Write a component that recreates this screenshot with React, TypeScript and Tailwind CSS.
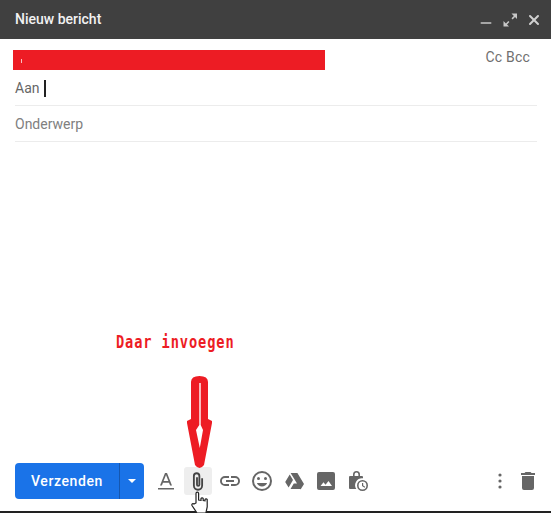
import { Minus, X } from 'lucide-react'

const Icon = ({ d, className = '' }: { d: string; className?: string }) => (
  <svg viewBox="0 0 24 24" className={`w-6 h-6 fill-[#666666] ${className}`}>
    <path d={d} />
  </svg>
)

export default function App() {
  return (
    <div className="relative w-[551px] h-[513px] bg-white flex flex-col overflow-hidden font-['Roboto',sans-serif]">
      {/* Header */}
      <div className="h-[39px] shrink-0 bg-[#404040] flex items-center justify-between pl-[15px] pr-[9px]">
        <span className="text-[14px] font-medium text-[#f2f2f2]">Nieuw bericht</span>
        <div className="flex items-center gap-[8px]">
          <Minus className="w-4 h-4 text-[#c8c8c8] translate-y-[3px]" strokeWidth={2.5} />
          <svg viewBox="0 0 16 16" className="w-4 h-4 fill-[#c8c8c8]">
            <path d="M9.5 1.5H15V7l-2-2-2.4 2.4-1.1-1.1L11.9 4zM1.5 9v5.5H7l-2-2 2.4-2.4-1.1-1.1L3.9 11.4z" />
          </svg>
          <X className="w-4 h-4 text-[#d0d0d0]" strokeWidth={3} />
        </div>
      </div>

      {/* Fields */}
      <div className="relative pt-[11px] flex flex-col">
        <div className="flex items-start justify-between h-[20px] pl-[13px] pr-[21px]">
          <div className="relative w-[312px] h-[20px] bg-[#ed1c24]">
            <div className="absolute left-[8px] top-[9px] w-px h-[4px] bg-[#f9c0c0]" />
          </div>
          <span className="text-[14px] leading-[14px] text-[#6f6f6f] tracking-[0.2px]">Cc Bcc</span>
        </div>
        <div className="mx-[15px] w-[522px] h-[36px] pt-[2px] border-b border-[#ececec] flex items-center gap-[5px]">
          <span className="text-[14px] text-[#666666]">Aan</span>
          <span className="w-[2px] h-[17px] bg-[#222222]" />
        </div>
        <div className="mx-[15px] w-[522px] h-[36px] pt-[2px] border-b border-[#ececec] flex items-center">
          <span className="text-[14px] text-[#808080]">Onderwerp</span>
        </div>
      </div>

      <div className="flex-1" />

      {/* Toolbar */}
      <div className="h-[36px] shrink-0 flex items-center pl-[15px] pr-[11px] mb-[14px]">
        <div className="flex h-[36px] w-[129px] rounded-[4px] bg-[#1a73e8] text-white">
          <div className="w-[105px] border-r border-[#1557b0] flex items-center justify-center text-[14px] font-medium tracking-[0.6px]">
            Verzenden
          </div>
          <div className="flex-1 flex items-center justify-center">
            <div className="w-0 h-0 border-x-[4px] border-x-transparent border-t-[4px] border-t-white" />
          </div>
        </div>
        <div className="ml-[10px] flex items-center">
          <div className="w-[24px] flex justify-center">
            <svg viewBox="0 0 24 24" className="w-6 h-6 fill-[#666666]">
              <path d="M4 19h16v1.6H4zM11 4h2l5 12.5h-1.9L15 13.7H9l-1.1 2.8H6zm-1.4 8h4.8L12 5.9z" />
            </svg>
          </div>
          <div className="ml-[6px] w-[28px] h-[28px] rounded-[3px] bg-[#eeeeee] flex items-center justify-center">
            <svg viewBox="0 0 24 24" className="w-[22px] h-[22px] fill-none stroke-[#444444] stroke-[2]">
              <path d="M16.500 9V17a4.500 4.500 0 0 1-9 0V6.500a3 3 0 0 1 6 0V16a1.300 1.300 0 0 1-2.600 0V8" />
            </svg>
          </div>
          <Icon className="ml-[6px]" d="M3.9 12A3.1 3.1 0 0 1 7 8.9h4V7H7a5 5 0 0 0 0 10h4v-1.9H7A3.1 3.1 0 0 1 3.9 12zM8 13h8v-2H8zm9-6h-4v1.9h4a3.1 3.1 0 0 1 0 6.2h-4V17h4a5 5 0 0 0 0-10z" />
          <Icon className="ml-[8px]" d="M12 2a10 10 0 1 0 0 20 10 10 0 0 0 0-20zm0 18a8 8 0 1 1 0-16 8 8 0 0 1 0 16zm3.5-9a1.5 1.5 0 1 0 0-3 1.5 1.5 0 0 0 0 3zm-7 0a1.5 1.5 0 1 0 0-3 1.5 1.5 0 0 0 0 3zM12 17.5c2.3 0 4.3-1.5 5.1-3.5H6.900c.8 2 2.800 3.500 5.100 3.500z" />
          <Icon className="ml-[8px]" d="M8.600 4h6.800l6.600 11-3.400 5.500-6.600-11zM7.700 5.500 11 11l-4.400 7.500L3.200 13zM8.500 20l3.300-5.500H22L18.700 20z" />
          <Icon className="ml-[8px]" d="M19 3H5a2 2 0 0 0-2 2v14a2 2 0 0 0 2 2h14a2 2 0 0 0 2-2V5a2 2 0 0 0-2-2zM6.500 17l3-3.800 2 2.600 3-3.900L18 17z" />
          <svg viewBox="0 0 24 24" className="ml-[8px] w-6 h-6 fill-[#666666]">
            <path d="M7 7V5.500a3.500 3.500 0 0 1 7 0V7h2a1 1 0 0 1 1 1v1.200A7 7 0 0 0 10.300 20H4a1 1 0 0 1-1-1V8a1 1 0 0 1 1-1zm1.600 0h3.800V5.500a1.900 1.900 0 0 0-3.800 0z" />
            <path fillRule="evenodd" d="M16.500 11a5.500 5.500 0 1 1 0 11 5.500 5.500 0 0 1 0-11zm0 1.600a3.900 3.900 0 1 0 0 7.800 3.900 3.900 0 0 0 0-7.800zM16 14h1.200v2.500l2 1.200-.6 1-2.600-1.600z" />
          </svg>
        </div>
        <div className="ml-auto flex items-center gap-[4px]">
          <Icon d="M12 7.600a1.600 1.600 0 1 0 0-3.200 1.600 1.600 0 0 0 0 3.200zm0 2.800a1.600 1.600 0 1 0 0 3.200 1.600 1.600 0 0 0 0-3.200zm0 6a1.600 1.600 0 1 0 0 3.200 1.600 1.600 0 0 0 0-3.200z" />
          <Icon d="M6 19a2 2 0 0 0 2 2h8a2 2 0 0 0 2-2V7H6zM19 4h-3.500l-1-1h-5l-1 1H5v2h14z" />
        </div>
      </div>

      {/* Bottom edge */}
      <div className="absolute left-0 right-0 bottom-0 h-[2px] bg-[#222222]" />

      {/* Annotation */}
      <span className="absolute left-[116px] top-[332px] text-[17px] leading-[20px] font-bold tracking-[1.1px] text-[#ed1c24] font-['DejaVu_Sans_Mono',monospace] scale-x-[0.805] origin-left whitespace-nowrap">
        Daar invoegen
      </span>
      <svg viewBox="0 0 27 95" className="absolute left-[186px] top-[376px] w-[27px] h-[95px]">
        <path
          fillRule="evenodd"
          fill="#ed1c24"
          d="M5 6 Q5 0 13.500 0 Q22 0 22 6 V43 L26 45 V47 L18 89 Q13.500 95 9 89 L1 47 V45 L5 43 Z M13.300 7 H14.700 V49 L17 54 L13.800 72 L10 54 L13.300 49 Z"
        />
      </svg>

      {/* Hand cursor */}
      <svg viewBox="0 0 18 24" className="absolute left-[191px] top-[491px] w-[18px] h-[24px]">
        <path
          d="M5 12V2.500a1.300 1.300 0 0 1 2.600 0V9l2.400.3V7.600a1.200 1.200 0 0 1 2.200 0v2l1.800.3V8.500a1.200 1.200 0 0 1 2.200 0V16l-1.300 6H6L1 14.500c-.6-1.500 1-2.500 2-1.500z"
          fill="#ffffff"
          stroke="#222222"
          strokeWidth="1.200"
        />
      </svg>
    </div>
  )
}
